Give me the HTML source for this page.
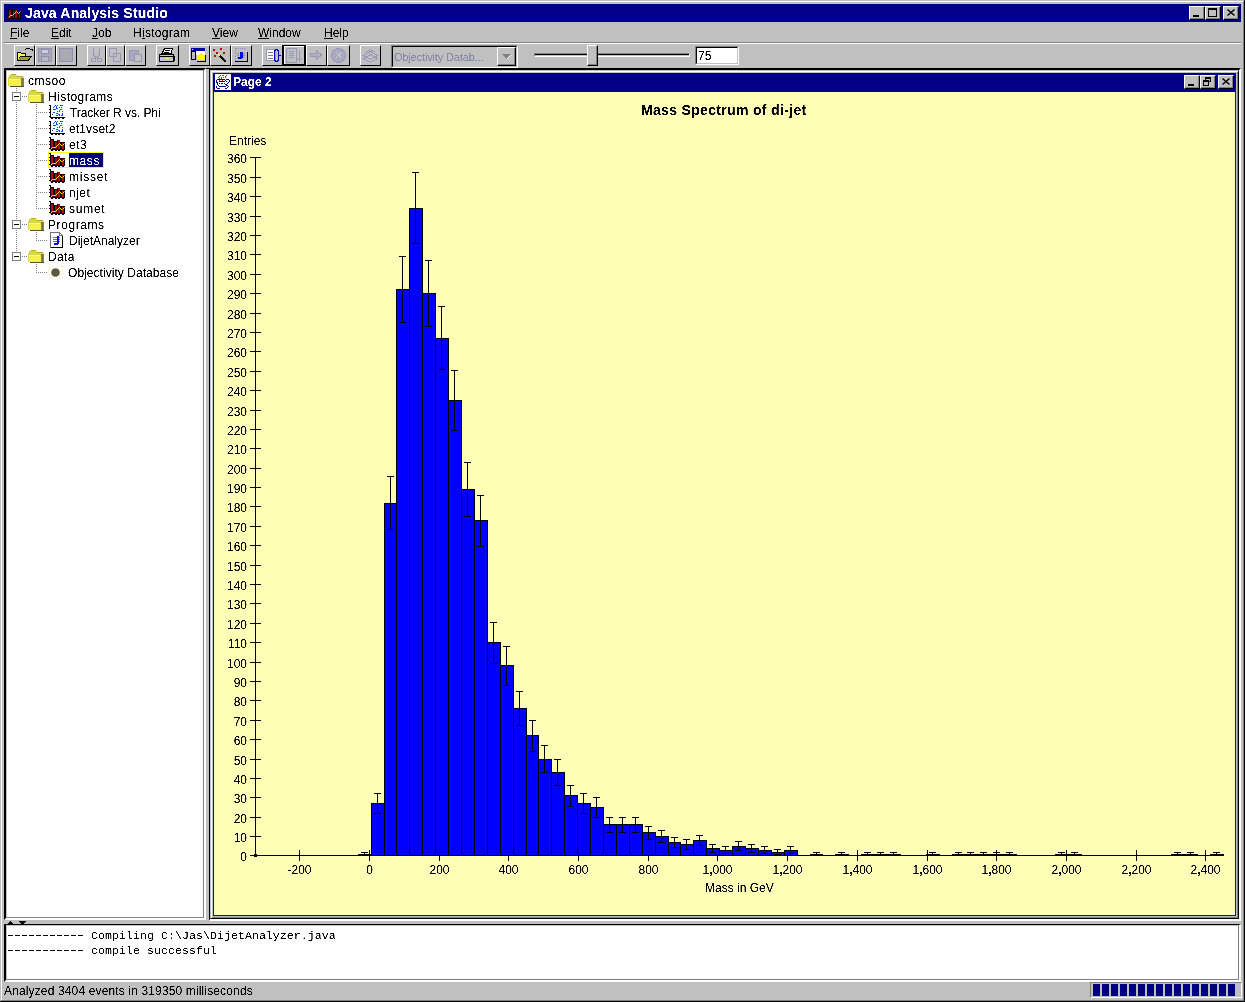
<!DOCTYPE html>
<html><head><meta charset="utf-8">
<style>
*{margin:0;padding:0;box-sizing:border-box}
html,body{width:1245px;height:1002px;overflow:hidden;background:#c0c0c0;font-family:"Liberation Sans",sans-serif;font-size:12px;color:#000}
.a{position:absolute}
.t{position:absolute;white-space:nowrap;line-height:12px;filter:url(#crisp)}
.btn{position:absolute;background:#c0c0c0;border-top:1px solid #fff;border-left:1px solid #fff;border-right:1px solid #000;border-bottom:1px solid #000}
.tb{position:absolute;background:#c0c0c0;border-top:1px solid #fff;border-left:1px solid #fff;border-right:1px solid #000;border-bottom:1px solid #000;box-shadow:inset -1px -1px 0 #808080}
.u{text-decoration:underline}
svg{position:absolute;overflow:visible}
</style></head><body>
<svg width="0" height="0" style="position:absolute;left:0;top:0"><filter id="crisp" x="-20%" y="-60%" width="140%" height="220%"><feComponentTransfer><feFuncA type="linear" slope="3" intercept="-0.9"/></feComponentTransfer></filter></svg>
<!-- outer frame -->
<div class="a" style="left:1px;top:1px;width:1242px;height:999px;border-top:1px solid #fff;border-left:1px solid #fff"></div>
<div class="a" style="left:1243px;top:1px;width:1px;height:1000px;background:#808080"></div>
<div class="a" style="left:1244px;top:0;width:1px;height:1002px;background:#000"></div>
<div class="a" style="left:1px;top:1000px;width:1243px;height:1px;background:#808080"></div>
<div class="a" style="left:0;top:1001px;width:1245px;height:1px;background:#000"></div>

<!-- title bar -->
<div class="a" style="left:4px;top:4px;width:1237px;height:18px;background:#000088"></div>
<div class="t" style="left:25px;top:7px;color:#fff;font-weight:bold;font-size:14px;letter-spacing:0.17px">Java Analysis Studio</div>
<div class="btn" style="left:1189px;top:6px;width:16px;height:14px;box-shadow:inset -1px -1px 0 #808080"></div>
<div class="a" style="left:1193px;top:15px;width:6px;height:2px;background:#000"></div>
<div class="btn" style="left:1205px;top:6px;width:16px;height:14px;box-shadow:inset -1px -1px 0 #808080"></div>
<div class="a" style="left:1208px;top:8px;width:9px;height:9px;border:1px solid #000;border-top-width:2px"></div>
<div class="btn" style="left:1223px;top:6px;width:16px;height:14px;box-shadow:inset -1px -1px 0 #808080"></div>
<svg style="left:1227px;top:9px" width="8" height="7"><path d="M0.5 0.5L7.5 6.5M7.5 0.5L0.5 6.5" stroke="#000" stroke-width="1.5"/></svg>


<!-- menu -->
<div class="t" style="left:10px;top:27px"><span class="u">F</span>ile</div>
<div class="t" style="left:51px;top:27px"><span class="u">E</span>dit</div>
<div class="t" style="left:92px;top:27px"><span class="u">J</span>ob</div>
<div class="t" style="left:133px;top:27px;letter-spacing:0.3px">H<span class="u">i</span>stogram</div>
<div class="t" style="left:212px;top:27px"><span class="u">V</span>iew</div>
<div class="t" style="left:258px;top:27px"><span class="u">W</span>indow</div>
<div class="t" style="left:324px;top:27px"><span class="u">H</span>elp</div>
<div class="a" style="left:4px;top:42px;width:1237px;height:1px;background:#808080"></div>
<div class="a" style="left:5px;top:43px;width:1236px;height:1px;background:#fff"></div>

<!-- TOOLBAR -->
<div class="tb" style="left:14px;top:45px;width:21px;height:21px;box-shadow:none"></div>
<div class="tb" style="left:35px;top:45px;width:21px;height:21px;box-shadow:none"></div>
<div class="tb" style="left:56px;top:45px;width:21px;height:21px;box-shadow:none"></div>
<div class="tb" style="left:87px;top:45px;width:19px;height:21px;box-shadow:none"></div>
<div class="tb" style="left:106px;top:45px;width:19px;height:21px;box-shadow:none"></div>
<div class="tb" style="left:125px;top:45px;width:21px;height:21px;box-shadow:none"></div>
<div class="tb" style="left:156px;top:45px;width:23px;height:21px;box-shadow:none"></div>
<div class="tb" style="left:189px;top:45px;width:21px;height:21px;box-shadow:none"></div>
<div class="tb" style="left:210px;top:45px;width:21px;height:21px;box-shadow:none"></div>
<div class="tb" style="left:231px;top:45px;width:21px;height:21px;box-shadow:none"></div>
<div class="tb" style="left:262px;top:45px;width:21px;height:21px;box-shadow:none"></div>
<div class="a" style="left:282px;top:45px;width:24px;height:21px;border:2px solid #000;border-top-width:1px;background:#c0c0c0;box-shadow:inset 1px 1px 0 #fff"></div>
<div class="tb" style="left:306px;top:45px;width:21px;height:21px;box-shadow:none"></div>
<div class="tb" style="left:327px;top:45px;width:23px;height:21px;box-shadow:none"></div>
<div class="tb" style="left:360px;top:45px;width:21px;height:21px;box-shadow:none"></div>
<svg style="left:0;top:0" width="400" height="70" shape-rendering="crispEdges">
<!-- open folder -->
<path d="M17 52h4v1h5v3h6l-3 5h-12z" fill="#000"/>
<path d="M18 53h3v1h4v2h-5l-2 4z" fill="#ffff40"/>
<path d="M20 57h10l-2 3h-10z" fill="#a0a020"/>
<path d="M25 50q3-3 6 0" stroke="#000" fill="none" stroke-width="1"/>
<path d="M30 49h3v3z" fill="#000"/>
<!-- save disabled -->
<g stroke="#9090b0" stroke-width="1"><rect x="38.5" y="48.5" width="13" height="13" fill="#a8a8b8"/><rect x="41.5" y="49.5" width="7" height="4" fill="#d0d0d8"/><rect x="41.5" y="56.5" width="7" height="5" fill="#b8b8c0"/></g>
<g stroke="#9090b0" stroke-width="1"><rect x="59.5" y="48.5" width="13" height="13" fill="#a8a8b8"/><path d="M62 51h7M62 54h7M62 57h7" stroke="#b8b098"/></g>
<!-- cut/copy/paste disabled -->
<g fill="none" stroke="#9898b8" stroke-width="1"><path d="M93.5 48v7l3 3M99.5 48v7l-3 3"/><circle cx="93.5" cy="60" r="2"/><circle cx="99.5" cy="60" r="2"/></g>
<g fill="none" stroke="#9898b8" stroke-width="1"><rect x="109.5" y="48.5" width="7" height="8"/><rect x="113.5" y="53.5" width="7" height="8"/></g>
<g fill="none" stroke="#9898b8" stroke-width="1"><rect x="129.5" y="50.5" width="9" height="10" fill="#a8a8c0"/><rect x="134.5" y="54.5" width="7" height="7" fill="#c0c0c0"/></g>
<!-- printer -->
<path d="M164.5 48.5h8l-1.5 5h-9z" fill="#fff" stroke="#000"/>
<path d="M165 50.5h5M164 52.5h5" stroke="#000"/>
<rect x="159.5" y="54.5" width="14" height="7" fill="#c4c4cc" stroke="#000"/>
<path d="M160 56.5h13M174.5 55.5v5" stroke="#000"/>
<rect x="166" y="58" width="3" height="1" fill="#ffff00"/>
<!-- window+folder -->
<rect x="191" y="48" width="14" height="3" fill="#0000a0"/>
<rect x="192" y="49" width="1" height="1" fill="#fff"/>
<rect x="191.5" y="51.5" width="4" height="8" fill="#c0c0c0" stroke="#000"/>
<rect x="196" y="51" width="9" height="4" fill="#fff"/>
<path d="M197 55h2l1-2h2l1 2h2v5h-8z" fill="#ffff00"/>
<path d="M205.5 55v6.5h-9" stroke="#000" fill="none"/>
<!-- wand -->
<path d="M219 55l7 7" stroke="#000" stroke-width="2"/>
<rect x="218" y="54" width="2" height="2" fill="#ffff00"/>
<g fill="#c00000"><rect x="213" y="49" width="2" height="2"/><rect x="216" y="52" width="2" height="2"/><rect x="220" y="48" width="2" height="2"/><rect x="223" y="52" width="2" height="2"/><rect x="214" y="55" width="2" height="2"/></g>
<!-- java doc -->
<path d="M235.5 48.5h9l3 3v10h-12z" fill="none" stroke="#9090a8" stroke-dasharray="1 1"/>
<path d="M247.5 51.5v10.5M235 61.5h13" stroke="#000"/>
<g stroke="#909090"><path d="M237 53.5h2M237 55.5h2M237 57.5h2M243 53.5h2M243 55.5h2M243 57.5h2"/></g>
<path d="M240 52h3v6h-1v1h-4v-2h2z" fill="#0000ff"/>
<!-- page w/ bracket -->
<rect x="266.5" y="49.5" width="9" height="11" fill="#fff" stroke="#9898b8"/>
<g stroke="#808080"><path d="M268 52h5M268 55h5M268 58h5"/></g>
<path d="M276.5 49.5q-2 0-2 3v6q0 3 2 3M276.5 49.5q2 0 2 3v6q0 3-2 3" stroke="#0000c0" fill="none"/>
<path d="M279 55h2" stroke="#0000c0"/>
<!-- list disabled -->
<g stroke="#9898b8" fill="none"><rect x="286.5" y="48.5" width="10" height="14"/><path d="M289 51.5h5M289 53.5h5M289 55.5h5M289 57.5h5"/><path d="M299.5 50v10M297.5 58l2 3 2-3"/></g>
<!-- arrow disabled -->
<path d="M310.5 53.5h6v-3l5 4.5-5 4.5v-3h-6z" fill="#b0b0c8" stroke="#9898b8"/>
<!-- circle disabled -->
<circle cx="338.5" cy="55.5" r="7" fill="#a8a8c0" stroke="#9898b8"/>
<path d="M336 52l3 3-3 3M341 52l-2 3 2 3" stroke="#c8c8c8" fill="none"/>
<!-- stack disabled -->
<g stroke="#9898b8" fill="none"><path d="M363.5 58.5l7-4 7 4-7 4z"/><path d="M363.5 55.5l7-4 7 4-7 4z"/><path d="M365.5 52.5l5-3 5 3"/></g>
</svg>
<!-- combo -->
<div class="a" style="left:391px;top:45px;width:127px;height:23px;border-top:1px solid #808080;border-left:1px solid #808080;border-right:1px solid #fff;border-bottom:1px solid #fff"></div>
<div class="a" style="left:392px;top:46px;width:125px;height:21px;border-top:1px solid #000;border-left:1px solid #000;border-right:1px solid #c0c0c0;border-bottom:1px solid #c0c0c0"></div>
<div class="t" style="left:394px;top:51px;color:#8888a8;font-size:11px;letter-spacing:-0.15px">Objectivity Datab...</div>
<div class="tb" style="left:497px;top:47px;width:19px;height:19px"></div>
<svg style="left:502px;top:54px" width="9" height="5"><path d="M0 0h9l-4.5 5z" fill="#808080"/><path d="M5 5l4-4" stroke="#fff"/></svg>
<!-- slider -->
<div class="a" style="left:534px;top:53px;width:156px;height:4px;border-top:1px solid #808080;border-left:1px solid #808080;border-right:1px solid #fff;border-bottom:1px solid #fff"></div>
<div class="a" style="left:535px;top:54px;width:154px;height:1px;background:#000"></div>
<div class="tb" style="left:587px;top:45px;width:11px;height:21px"></div>
<!-- text field -->
<div class="a" style="left:695px;top:46px;width:44px;height:19px;border-top:1px solid #808080;border-left:1px solid #808080;border-right:1px solid #fff;border-bottom:1px solid #fff"></div>
<div class="a" style="left:696px;top:47px;width:42px;height:17px;border-top:1px solid #000;border-left:1px solid #000;border-right:1px solid #c0c0c0;border-bottom:1px solid #c0c0c0;background:#fff"></div>
<div class="t" style="left:698px;top:50px">75</div>


<!-- tree panel -->
<div class="a" style="left:4px;top:68px;width:1237px;height:2px;background:#000"></div>
<div class="a" style="left:4px;top:68px;width:202px;height:852px;border-top:2px solid #000;border-left:2px solid #000;border-right:2px solid #fff;border-bottom:2px solid #fff;background:#fff"></div>
<div class="a" style="left:6px;top:70px;width:198px;height:848px;border-right:1px solid #808080;border-bottom:1px solid #808080;border-top:1px solid #c0c0c0;border-left:1px solid #c0c0c0"></div>
<svg style="left:0;top:0" width="210" height="300" shape-rendering="crispEdges"><rect x="16" y="88" width="1" height="1" fill="#808080"/><rect x="16" y="90" width="1" height="1" fill="#808080"/><rect x="16" y="92" width="1" height="1" fill="#808080"/><rect x="16" y="94" width="1" height="1" fill="#808080"/><rect x="16" y="96" width="1" height="1" fill="#808080"/><rect x="16" y="98" width="1" height="1" fill="#808080"/><rect x="16" y="100" width="1" height="1" fill="#808080"/><rect x="16" y="102" width="1" height="1" fill="#808080"/><rect x="16" y="104" width="1" height="1" fill="#808080"/><rect x="16" y="106" width="1" height="1" fill="#808080"/><rect x="16" y="108" width="1" height="1" fill="#808080"/><rect x="16" y="110" width="1" height="1" fill="#808080"/><rect x="16" y="112" width="1" height="1" fill="#808080"/><rect x="16" y="114" width="1" height="1" fill="#808080"/><rect x="16" y="116" width="1" height="1" fill="#808080"/><rect x="16" y="118" width="1" height="1" fill="#808080"/><rect x="16" y="120" width="1" height="1" fill="#808080"/><rect x="16" y="122" width="1" height="1" fill="#808080"/><rect x="16" y="124" width="1" height="1" fill="#808080"/><rect x="16" y="126" width="1" height="1" fill="#808080"/><rect x="16" y="128" width="1" height="1" fill="#808080"/><rect x="16" y="130" width="1" height="1" fill="#808080"/><rect x="16" y="132" width="1" height="1" fill="#808080"/><rect x="16" y="134" width="1" height="1" fill="#808080"/><rect x="16" y="136" width="1" height="1" fill="#808080"/><rect x="16" y="138" width="1" height="1" fill="#808080"/><rect x="16" y="140" width="1" height="1" fill="#808080"/><rect x="16" y="142" width="1" height="1" fill="#808080"/><rect x="16" y="144" width="1" height="1" fill="#808080"/><rect x="16" y="146" width="1" height="1" fill="#808080"/><rect x="16" y="148" width="1" height="1" fill="#808080"/><rect x="16" y="150" width="1" height="1" fill="#808080"/><rect x="16" y="152" width="1" height="1" fill="#808080"/><rect x="16" y="154" width="1" height="1" fill="#808080"/><rect x="16" y="156" width="1" height="1" fill="#808080"/><rect x="16" y="158" width="1" height="1" fill="#808080"/><rect x="16" y="160" width="1" height="1" fill="#808080"/><rect x="16" y="162" width="1" height="1" fill="#808080"/><rect x="16" y="164" width="1" height="1" fill="#808080"/><rect x="16" y="166" width="1" height="1" fill="#808080"/><rect x="16" y="168" width="1" height="1" fill="#808080"/><rect x="16" y="170" width="1" height="1" fill="#808080"/><rect x="16" y="172" width="1" height="1" fill="#808080"/><rect x="16" y="174" width="1" height="1" fill="#808080"/><rect x="16" y="176" width="1" height="1" fill="#808080"/><rect x="16" y="178" width="1" height="1" fill="#808080"/><rect x="16" y="180" width="1" height="1" fill="#808080"/><rect x="16" y="182" width="1" height="1" fill="#808080"/><rect x="16" y="184" width="1" height="1" fill="#808080"/><rect x="16" y="186" width="1" height="1" fill="#808080"/><rect x="16" y="188" width="1" height="1" fill="#808080"/><rect x="16" y="190" width="1" height="1" fill="#808080"/><rect x="16" y="192" width="1" height="1" fill="#808080"/><rect x="16" y="194" width="1" height="1" fill="#808080"/><rect x="16" y="196" width="1" height="1" fill="#808080"/><rect x="16" y="198" width="1" height="1" fill="#808080"/><rect x="16" y="200" width="1" height="1" fill="#808080"/><rect x="16" y="202" width="1" height="1" fill="#808080"/><rect x="16" y="204" width="1" height="1" fill="#808080"/><rect x="16" y="206" width="1" height="1" fill="#808080"/><rect x="16" y="208" width="1" height="1" fill="#808080"/><rect x="16" y="210" width="1" height="1" fill="#808080"/><rect x="16" y="212" width="1" height="1" fill="#808080"/><rect x="16" y="214" width="1" height="1" fill="#808080"/><rect x="16" y="216" width="1" height="1" fill="#808080"/><rect x="16" y="218" width="1" height="1" fill="#808080"/><rect x="16" y="220" width="1" height="1" fill="#808080"/><rect x="16" y="222" width="1" height="1" fill="#808080"/><rect x="16" y="224" width="1" height="1" fill="#808080"/><rect x="16" y="226" width="1" height="1" fill="#808080"/><rect x="16" y="228" width="1" height="1" fill="#808080"/><rect x="16" y="230" width="1" height="1" fill="#808080"/><rect x="16" y="232" width="1" height="1" fill="#808080"/><rect x="16" y="234" width="1" height="1" fill="#808080"/><rect x="16" y="236" width="1" height="1" fill="#808080"/><rect x="16" y="238" width="1" height="1" fill="#808080"/><rect x="16" y="240" width="1" height="1" fill="#808080"/><rect x="16" y="242" width="1" height="1" fill="#808080"/><rect x="16" y="244" width="1" height="1" fill="#808080"/><rect x="16" y="246" width="1" height="1" fill="#808080"/><rect x="16" y="248" width="1" height="1" fill="#808080"/><rect x="16" y="250" width="1" height="1" fill="#808080"/><rect x="16" y="252" width="1" height="1" fill="#808080"/><rect x="16" y="254" width="1" height="1" fill="#808080"/><rect x="16" y="256" width="1" height="1" fill="#808080"/><rect x="36" y="104" width="1" height="1" fill="#808080"/><rect x="36" y="106" width="1" height="1" fill="#808080"/><rect x="36" y="108" width="1" height="1" fill="#808080"/><rect x="36" y="110" width="1" height="1" fill="#808080"/><rect x="36" y="112" width="1" height="1" fill="#808080"/><rect x="36" y="114" width="1" height="1" fill="#808080"/><rect x="36" y="116" width="1" height="1" fill="#808080"/><rect x="36" y="118" width="1" height="1" fill="#808080"/><rect x="36" y="120" width="1" height="1" fill="#808080"/><rect x="36" y="122" width="1" height="1" fill="#808080"/><rect x="36" y="124" width="1" height="1" fill="#808080"/><rect x="36" y="126" width="1" height="1" fill="#808080"/><rect x="36" y="128" width="1" height="1" fill="#808080"/><rect x="36" y="130" width="1" height="1" fill="#808080"/><rect x="36" y="132" width="1" height="1" fill="#808080"/><rect x="36" y="134" width="1" height="1" fill="#808080"/><rect x="36" y="136" width="1" height="1" fill="#808080"/><rect x="36" y="138" width="1" height="1" fill="#808080"/><rect x="36" y="140" width="1" height="1" fill="#808080"/><rect x="36" y="142" width="1" height="1" fill="#808080"/><rect x="36" y="144" width="1" height="1" fill="#808080"/><rect x="36" y="146" width="1" height="1" fill="#808080"/><rect x="36" y="148" width="1" height="1" fill="#808080"/><rect x="36" y="150" width="1" height="1" fill="#808080"/><rect x="36" y="152" width="1" height="1" fill="#808080"/><rect x="36" y="154" width="1" height="1" fill="#808080"/><rect x="36" y="156" width="1" height="1" fill="#808080"/><rect x="36" y="158" width="1" height="1" fill="#808080"/><rect x="36" y="160" width="1" height="1" fill="#808080"/><rect x="36" y="162" width="1" height="1" fill="#808080"/><rect x="36" y="164" width="1" height="1" fill="#808080"/><rect x="36" y="166" width="1" height="1" fill="#808080"/><rect x="36" y="168" width="1" height="1" fill="#808080"/><rect x="36" y="170" width="1" height="1" fill="#808080"/><rect x="36" y="172" width="1" height="1" fill="#808080"/><rect x="36" y="174" width="1" height="1" fill="#808080"/><rect x="36" y="176" width="1" height="1" fill="#808080"/><rect x="36" y="178" width="1" height="1" fill="#808080"/><rect x="36" y="180" width="1" height="1" fill="#808080"/><rect x="36" y="182" width="1" height="1" fill="#808080"/><rect x="36" y="184" width="1" height="1" fill="#808080"/><rect x="36" y="186" width="1" height="1" fill="#808080"/><rect x="36" y="188" width="1" height="1" fill="#808080"/><rect x="36" y="190" width="1" height="1" fill="#808080"/><rect x="36" y="192" width="1" height="1" fill="#808080"/><rect x="36" y="194" width="1" height="1" fill="#808080"/><rect x="36" y="196" width="1" height="1" fill="#808080"/><rect x="36" y="198" width="1" height="1" fill="#808080"/><rect x="36" y="200" width="1" height="1" fill="#808080"/><rect x="36" y="202" width="1" height="1" fill="#808080"/><rect x="36" y="204" width="1" height="1" fill="#808080"/><rect x="36" y="206" width="1" height="1" fill="#808080"/><rect x="36" y="208" width="1" height="1" fill="#808080"/><rect x="36" y="232" width="1" height="1" fill="#808080"/><rect x="36" y="234" width="1" height="1" fill="#808080"/><rect x="36" y="236" width="1" height="1" fill="#808080"/><rect x="36" y="238" width="1" height="1" fill="#808080"/><rect x="36" y="240" width="1" height="1" fill="#808080"/><rect x="36" y="264" width="1" height="1" fill="#808080"/><rect x="36" y="266" width="1" height="1" fill="#808080"/><rect x="36" y="268" width="1" height="1" fill="#808080"/><rect x="36" y="270" width="1" height="1" fill="#808080"/><rect x="36" y="272" width="1" height="1" fill="#808080"/><rect x="11" y="74" width="5" height="1" fill="#c8a030"/><rect x="9" y="75" width="8" height="2" fill="#d8d840"/><rect x="17" y="76" width="6" height="1" fill="#c8a030"/><rect x="8" y="77" width="16" height="9" fill="#d8d848"/><rect x="9" y="79" width="11" height="1" fill="#e8e8f8"/><rect x="9" y="80" width="12" height="6" fill="#f4f050"/><rect x="21" y="78" width="3" height="8" fill="#808048"/><rect x="10" y="86" width="14" height="1" fill="#505030"/><rect x="12.5" y="92.5" width="8" height="8" fill="#fff" stroke="#808080"/><rect x="14" y="96" width="5" height="1" fill="#000"/><rect x="22" y="96" width="1" height="1" fill="#808080"/><rect x="24" y="96" width="1" height="1" fill="#808080"/><rect x="26" y="96" width="1" height="1" fill="#808080"/><rect x="31" y="90" width="5" height="1" fill="#c8a030"/><rect x="29" y="91" width="8" height="2" fill="#d8d840"/><rect x="37" y="92" width="6" height="1" fill="#c8a030"/><rect x="28" y="93" width="16" height="9" fill="#d8d848"/><rect x="29" y="95" width="11" height="1" fill="#e8e8f8"/><rect x="29" y="96" width="12" height="6" fill="#f4f050"/><rect x="41" y="94" width="3" height="8" fill="#808048"/><rect x="30" y="102" width="14" height="1" fill="#505030"/><rect x="38" y="112" width="1" height="1" fill="#808080"/><rect x="40" y="112" width="1" height="1" fill="#808080"/><rect x="42" y="112" width="1" height="1" fill="#808080"/><rect x="44" y="112" width="1" height="1" fill="#808080"/><rect x="46" y="112" width="1" height="1" fill="#808080"/><rect x="50" y="105" width="1" height="13" fill="#000"/><rect x="49" y="105" width="1" height="1" fill="#000"/><rect x="49" y="109" width="1" height="1" fill="#000"/><rect x="49" y="112" width="1" height="1" fill="#000"/><rect x="49" y="116" width="1" height="1" fill="#000"/><rect x="50" y="117" width="15" height="1" fill="#000"/><rect x="51" y="118" width="2" height="1" fill="#000"/><rect x="55" y="118" width="2" height="1" fill="#000"/><rect x="58" y="118" width="2" height="1" fill="#000"/><rect x="62" y="118" width="2" height="1" fill="#000"/><rect x="54" y="106" width="1" height="1" fill="#0050ff"/><rect x="55" y="105" width="1" height="1" fill="#0050ff"/><rect x="57" y="105" width="1" height="1" fill="#0050ff"/><rect x="60" y="105" width="1" height="1" fill="#0050ff"/><rect x="61" y="105" width="1" height="1" fill="#0050ff"/><rect x="62" y="105" width="1" height="1" fill="#0050ff"/><rect x="53" y="107" width="1" height="1" fill="#0050ff"/><rect x="56" y="106" width="1" height="1" fill="#0050ff"/><rect x="56" y="107" width="1" height="1" fill="#0050ff"/><rect x="59" y="107" width="1" height="1" fill="#0050ff"/><rect x="61" y="107" width="1" height="1" fill="#0050ff"/><rect x="53" y="109" width="1" height="1" fill="#0050ff"/><rect x="54" y="109" width="1" height="1" fill="#0050ff"/><rect x="55" y="109" width="1" height="1" fill="#0050ff"/><rect x="56" y="108" width="1" height="1" fill="#0050ff"/><rect x="57" y="108" width="1" height="1" fill="#0050ff"/><rect x="60" y="109" width="1" height="1" fill="#0050ff"/><rect x="61" y="109" width="1" height="1" fill="#0050ff"/><rect x="59" y="110" width="1" height="1" fill="#0050ff"/><rect x="59" y="111" width="1" height="1" fill="#0050ff"/><rect x="57" y="111" width="1" height="1" fill="#0050ff"/><rect x="62" y="111" width="1" height="1" fill="#0050ff"/><rect x="53" y="112" width="1" height="1" fill="#0050ff"/><rect x="54" y="112" width="1" height="1" fill="#0050ff"/><rect x="56" y="113" width="1" height="1" fill="#0050ff"/><rect x="57" y="113" width="1" height="1" fill="#0050ff"/><rect x="58" y="114" width="1" height="1" fill="#0050ff"/><rect x="52" y="114" width="1" height="1" fill="#0050ff"/><rect x="56" y="115" width="1" height="1" fill="#0050ff"/><rect x="57" y="115" width="1" height="1" fill="#0050ff"/><rect x="59" y="114" width="1" height="1" fill="#0050ff"/><rect x="59" y="115" width="1" height="1" fill="#0050ff"/><rect x="62" y="113" width="1" height="1" fill="#0050ff"/><rect x="62" y="114" width="1" height="1" fill="#0050ff"/><rect x="61" y="115" width="1" height="1" fill="#0050ff"/><rect x="62" y="115" width="1" height="1" fill="#0050ff"/><rect x="38" y="128" width="1" height="1" fill="#808080"/><rect x="40" y="128" width="1" height="1" fill="#808080"/><rect x="42" y="128" width="1" height="1" fill="#808080"/><rect x="44" y="128" width="1" height="1" fill="#808080"/><rect x="46" y="128" width="1" height="1" fill="#808080"/><rect x="50" y="121" width="1" height="13" fill="#000"/><rect x="49" y="121" width="1" height="1" fill="#000"/><rect x="49" y="125" width="1" height="1" fill="#000"/><rect x="49" y="128" width="1" height="1" fill="#000"/><rect x="49" y="132" width="1" height="1" fill="#000"/><rect x="50" y="133" width="15" height="1" fill="#000"/><rect x="51" y="134" width="2" height="1" fill="#000"/><rect x="55" y="134" width="2" height="1" fill="#000"/><rect x="58" y="134" width="2" height="1" fill="#000"/><rect x="62" y="134" width="2" height="1" fill="#000"/><rect x="54" y="122" width="1" height="1" fill="#0050ff"/><rect x="55" y="121" width="1" height="1" fill="#0050ff"/><rect x="57" y="121" width="1" height="1" fill="#0050ff"/><rect x="60" y="121" width="1" height="1" fill="#0050ff"/><rect x="61" y="121" width="1" height="1" fill="#0050ff"/><rect x="62" y="121" width="1" height="1" fill="#0050ff"/><rect x="53" y="123" width="1" height="1" fill="#0050ff"/><rect x="56" y="122" width="1" height="1" fill="#0050ff"/><rect x="56" y="123" width="1" height="1" fill="#0050ff"/><rect x="59" y="123" width="1" height="1" fill="#0050ff"/><rect x="61" y="123" width="1" height="1" fill="#0050ff"/><rect x="53" y="125" width="1" height="1" fill="#0050ff"/><rect x="54" y="125" width="1" height="1" fill="#0050ff"/><rect x="55" y="125" width="1" height="1" fill="#0050ff"/><rect x="56" y="124" width="1" height="1" fill="#0050ff"/><rect x="57" y="124" width="1" height="1" fill="#0050ff"/><rect x="60" y="125" width="1" height="1" fill="#0050ff"/><rect x="61" y="125" width="1" height="1" fill="#0050ff"/><rect x="59" y="126" width="1" height="1" fill="#0050ff"/><rect x="59" y="127" width="1" height="1" fill="#0050ff"/><rect x="57" y="127" width="1" height="1" fill="#0050ff"/><rect x="62" y="127" width="1" height="1" fill="#0050ff"/><rect x="53" y="128" width="1" height="1" fill="#0050ff"/><rect x="54" y="128" width="1" height="1" fill="#0050ff"/><rect x="56" y="129" width="1" height="1" fill="#0050ff"/><rect x="57" y="129" width="1" height="1" fill="#0050ff"/><rect x="58" y="130" width="1" height="1" fill="#0050ff"/><rect x="52" y="130" width="1" height="1" fill="#0050ff"/><rect x="56" y="131" width="1" height="1" fill="#0050ff"/><rect x="57" y="131" width="1" height="1" fill="#0050ff"/><rect x="59" y="130" width="1" height="1" fill="#0050ff"/><rect x="59" y="131" width="1" height="1" fill="#0050ff"/><rect x="62" y="129" width="1" height="1" fill="#0050ff"/><rect x="62" y="130" width="1" height="1" fill="#0050ff"/><rect x="61" y="131" width="1" height="1" fill="#0050ff"/><rect x="62" y="131" width="1" height="1" fill="#0050ff"/><rect x="38" y="144" width="1" height="1" fill="#808080"/><rect x="40" y="144" width="1" height="1" fill="#808080"/><rect x="42" y="144" width="1" height="1" fill="#808080"/><rect x="44" y="144" width="1" height="1" fill="#808080"/><rect x="46" y="144" width="1" height="1" fill="#808080"/><rect x="50" y="137" width="1" height="13" fill="#000"/><rect x="49" y="137" width="1" height="1" fill="#000"/><rect x="49" y="141" width="1" height="1" fill="#000"/><rect x="49" y="144" width="1" height="1" fill="#000"/><rect x="49" y="148" width="1" height="1" fill="#000"/><path d="M51 139h3v2h3v-1h3v2h5v8h-14z" fill="#000"/><rect x="51" y="140" width="2" height="9" fill="#b00000"/><rect x="55" y="142" width="2" height="7" fill="#b00000"/><rect x="58" y="140" width="2" height="9" fill="#b00000"/><rect x="62" y="143" width="2" height="6" fill="#b00000"/><rect x="51" y="150" width="2" height="1" fill="#000"/><rect x="55" y="150" width="2" height="1" fill="#000"/><rect x="58" y="150" width="2" height="1" fill="#000"/><rect x="62" y="150" width="2" height="1" fill="#000"/><path d="M50.5 149.5l2-2h3l4-4 2 2h1l2-2" stroke="#ffff00" fill="none" shape-rendering="auto"/><rect x="38" y="160" width="1" height="1" fill="#808080"/><rect x="40" y="160" width="1" height="1" fill="#808080"/><rect x="42" y="160" width="1" height="1" fill="#808080"/><rect x="44" y="160" width="1" height="1" fill="#808080"/><rect x="46" y="160" width="1" height="1" fill="#808080"/><rect x="50" y="153" width="1" height="13" fill="#000"/><rect x="49" y="153" width="1" height="1" fill="#000"/><rect x="49" y="157" width="1" height="1" fill="#000"/><rect x="49" y="160" width="1" height="1" fill="#000"/><rect x="49" y="164" width="1" height="1" fill="#000"/><path d="M51 155h3v2h3v-1h3v2h5v8h-14z" fill="#000"/><rect x="51" y="156" width="2" height="9" fill="#b00000"/><rect x="55" y="158" width="2" height="7" fill="#b00000"/><rect x="58" y="156" width="2" height="9" fill="#b00000"/><rect x="62" y="159" width="2" height="6" fill="#b00000"/><rect x="51" y="166" width="2" height="1" fill="#000"/><rect x="55" y="166" width="2" height="1" fill="#000"/><rect x="58" y="166" width="2" height="1" fill="#000"/><rect x="62" y="166" width="2" height="1" fill="#000"/><path d="M50.5 165.5l2-2h3l4-4 2 2h1l2-2" stroke="#ffff00" fill="none" shape-rendering="auto"/><rect x="38" y="176" width="1" height="1" fill="#808080"/><rect x="40" y="176" width="1" height="1" fill="#808080"/><rect x="42" y="176" width="1" height="1" fill="#808080"/><rect x="44" y="176" width="1" height="1" fill="#808080"/><rect x="46" y="176" width="1" height="1" fill="#808080"/><rect x="50" y="169" width="1" height="13" fill="#000"/><rect x="49" y="169" width="1" height="1" fill="#000"/><rect x="49" y="173" width="1" height="1" fill="#000"/><rect x="49" y="176" width="1" height="1" fill="#000"/><rect x="49" y="180" width="1" height="1" fill="#000"/><path d="M51 171h3v2h3v-1h3v2h5v8h-14z" fill="#000"/><rect x="51" y="172" width="2" height="9" fill="#b00000"/><rect x="55" y="174" width="2" height="7" fill="#b00000"/><rect x="58" y="172" width="2" height="9" fill="#b00000"/><rect x="62" y="175" width="2" height="6" fill="#b00000"/><rect x="51" y="182" width="2" height="1" fill="#000"/><rect x="55" y="182" width="2" height="1" fill="#000"/><rect x="58" y="182" width="2" height="1" fill="#000"/><rect x="62" y="182" width="2" height="1" fill="#000"/><path d="M50.5 181.5l2-2h3l4-4 2 2h1l2-2" stroke="#ffff00" fill="none" shape-rendering="auto"/><rect x="38" y="192" width="1" height="1" fill="#808080"/><rect x="40" y="192" width="1" height="1" fill="#808080"/><rect x="42" y="192" width="1" height="1" fill="#808080"/><rect x="44" y="192" width="1" height="1" fill="#808080"/><rect x="46" y="192" width="1" height="1" fill="#808080"/><rect x="50" y="185" width="1" height="13" fill="#000"/><rect x="49" y="185" width="1" height="1" fill="#000"/><rect x="49" y="189" width="1" height="1" fill="#000"/><rect x="49" y="192" width="1" height="1" fill="#000"/><rect x="49" y="196" width="1" height="1" fill="#000"/><path d="M51 187h3v2h3v-1h3v2h5v8h-14z" fill="#000"/><rect x="51" y="188" width="2" height="9" fill="#b00000"/><rect x="55" y="190" width="2" height="7" fill="#b00000"/><rect x="58" y="188" width="2" height="9" fill="#b00000"/><rect x="62" y="191" width="2" height="6" fill="#b00000"/><rect x="51" y="198" width="2" height="1" fill="#000"/><rect x="55" y="198" width="2" height="1" fill="#000"/><rect x="58" y="198" width="2" height="1" fill="#000"/><rect x="62" y="198" width="2" height="1" fill="#000"/><path d="M50.5 197.5l2-2h3l4-4 2 2h1l2-2" stroke="#ffff00" fill="none" shape-rendering="auto"/><rect x="38" y="208" width="1" height="1" fill="#808080"/><rect x="40" y="208" width="1" height="1" fill="#808080"/><rect x="42" y="208" width="1" height="1" fill="#808080"/><rect x="44" y="208" width="1" height="1" fill="#808080"/><rect x="46" y="208" width="1" height="1" fill="#808080"/><rect x="50" y="201" width="1" height="13" fill="#000"/><rect x="49" y="201" width="1" height="1" fill="#000"/><rect x="49" y="205" width="1" height="1" fill="#000"/><rect x="49" y="208" width="1" height="1" fill="#000"/><rect x="49" y="212" width="1" height="1" fill="#000"/><path d="M51 203h3v2h3v-1h3v2h5v8h-14z" fill="#000"/><rect x="51" y="204" width="2" height="9" fill="#b00000"/><rect x="55" y="206" width="2" height="7" fill="#b00000"/><rect x="58" y="204" width="2" height="9" fill="#b00000"/><rect x="62" y="207" width="2" height="6" fill="#b00000"/><rect x="51" y="214" width="2" height="1" fill="#000"/><rect x="55" y="214" width="2" height="1" fill="#000"/><rect x="58" y="214" width="2" height="1" fill="#000"/><rect x="62" y="214" width="2" height="1" fill="#000"/><path d="M50.5 213.5l2-2h3l4-4 2 2h1l2-2" stroke="#ffff00" fill="none" shape-rendering="auto"/><rect x="12.5" y="220.5" width="8" height="8" fill="#fff" stroke="#808080"/><rect x="14" y="224" width="5" height="1" fill="#000"/><rect x="22" y="224" width="1" height="1" fill="#808080"/><rect x="24" y="224" width="1" height="1" fill="#808080"/><rect x="26" y="224" width="1" height="1" fill="#808080"/><rect x="31" y="218" width="5" height="1" fill="#c8a030"/><rect x="29" y="219" width="8" height="2" fill="#d8d840"/><rect x="37" y="220" width="6" height="1" fill="#c8a030"/><rect x="28" y="221" width="16" height="9" fill="#d8d848"/><rect x="29" y="223" width="11" height="1" fill="#e8e8f8"/><rect x="29" y="224" width="12" height="6" fill="#f4f050"/><rect x="41" y="222" width="3" height="8" fill="#808048"/><rect x="30" y="230" width="14" height="1" fill="#505030"/><rect x="38" y="240" width="1" height="1" fill="#808080"/><rect x="40" y="240" width="1" height="1" fill="#808080"/><rect x="42" y="240" width="1" height="1" fill="#808080"/><rect x="44" y="240" width="1" height="1" fill="#808080"/><rect x="46" y="240" width="1" height="1" fill="#808080"/><path d="M50.5 232.5h9l3 3v12h-12z" fill="#fff" stroke="#707080"/><path d="M51 247.5h12M62.5 235v13" stroke="#000"/><path d="M59.5 232.5v3h3" stroke="#707080" fill="none"/><g stroke="#707080"><path d="M53 237.5h7M53 239.5h7M53 241.5h7"/></g><path d="M56 236h3v8h-1v1h-4v-2h3v-7z" fill="#0000ff"/><rect x="12.5" y="252.5" width="8" height="8" fill="#fff" stroke="#808080"/><rect x="14" y="256" width="5" height="1" fill="#000"/><rect x="22" y="256" width="1" height="1" fill="#808080"/><rect x="24" y="256" width="1" height="1" fill="#808080"/><rect x="26" y="256" width="1" height="1" fill="#808080"/><rect x="31" y="250" width="5" height="1" fill="#c8a030"/><rect x="29" y="251" width="8" height="2" fill="#d8d840"/><rect x="37" y="252" width="6" height="1" fill="#c8a030"/><rect x="28" y="253" width="16" height="9" fill="#d8d848"/><rect x="29" y="255" width="11" height="1" fill="#e8e8f8"/><rect x="29" y="256" width="12" height="6" fill="#f4f050"/><rect x="41" y="254" width="3" height="8" fill="#808048"/><rect x="30" y="262" width="14" height="1" fill="#505030"/><rect x="38" y="272" width="1" height="1" fill="#808080"/><rect x="40" y="272" width="1" height="1" fill="#808080"/><rect x="42" y="272" width="1" height="1" fill="#808080"/><rect x="44" y="272" width="1" height="1" fill="#808080"/><rect x="46" y="272" width="1" height="1" fill="#808080"/><circle cx="55.5" cy="272.5" r="4.3" fill="#5a5a40" shape-rendering="auto"/><rect x="49" y="267" width="1" height="1" fill="#f0f080"/><rect x="61" y="266" width="1" height="1" fill="#f0f080"/><rect x="63" y="266" width="1" height="1" fill="#f0f080"/><rect x="48" y="270" width="1" height="1" fill="#f0f080"/><rect x="60" y="271" width="1" height="1" fill="#f0f080"/><rect x="62" y="270" width="1" height="1" fill="#f0f080"/><rect x="49" y="274" width="1" height="1" fill="#f0f080"/><rect x="61" y="274" width="1" height="1" fill="#f0f080"/><rect x="63" y="273" width="1" height="1" fill="#f0f080"/><rect x="50" y="277" width="1" height="1" fill="#f0f080"/><rect x="52" y="277" width="1" height="1" fill="#f0f080"/><rect x="59" y="277" width="1" height="1" fill="#f0f080"/><rect x="62" y="277" width="1" height="1" fill="#f0f080"/></svg>
<div class="t" style="left:28px;top:75px;letter-spacing:0.5px">cmsoo</div>
<div class="t" style="left:48px;top:91px;letter-spacing:0.45px">Histograms</div>
<div class="t" style="left:70px;top:107px;letter-spacing:-0.06px">Tracker R vs. Phi</div>
<div class="t" style="left:69px;top:123px;letter-spacing:0.14px">et1vset2</div>
<div class="t" style="left:69px;top:139px;letter-spacing:0.5px">et3</div>
<div class="a" style="left:48px;top:152px;width:56px;height:16px;border:1px solid #ffff00"></div>
<div class="a" style="left:69px;top:153px;width:34px;height:14px;background:#000080"></div>
<div class="t" style="left:69px;top:155px;color:#fff;letter-spacing:0.6px">mass</div>
<div class="t" style="left:69px;top:171px;letter-spacing:0.8px">misset</div>
<div class="t" style="left:69px;top:187px;letter-spacing:0.5px">njet</div>
<div class="t" style="left:69px;top:203px;letter-spacing:0.75px">sumet</div>
<div class="t" style="left:48px;top:219px;letter-spacing:0.57px">Programs</div>
<div class="t" style="left:69px;top:235px;letter-spacing:0px">DijetAnalyzer</div>
<div class="t" style="left:48px;top:251px;letter-spacing:0.33px">Data</div>
<div class="t" style="left:68px;top:267px;letter-spacing:0.05px">Objectivity Database</div>

<!-- desktop -->
<div class="a" style="left:206px;top:69px;width:3px;height:1px;background:#c0c0c0"></div>
<div class="a" style="left:209px;top:68px;width:1032px;height:853px;border-top:2px solid #000;border-left:1px solid #000;border-right:2px solid #fff;border-bottom:2px solid #fff"></div>
<!-- internal frame -->
<div class="a" style="left:210px;top:70px;width:1029px;height:849px;background:#c0c0c0;border-top:1px solid #c0c0c0;border-left:1px solid #c0c0c0;border-right:1px solid #000;border-bottom:1px solid #000;box-shadow:inset 1px 1px 0 #fff, inset -1px -1px 0 #808080"></div>
<div class="a" style="left:213px;top:73px;width:1023px;height:19px;background:#000088"></div>
<div class="t" style="left:233px;top:76px;color:#fff;font-weight:bold">Page 2</div>
<div class="btn" style="left:1184px;top:75px;width:16px;height:14px;box-shadow:inset -1px -1px 0 #808080"></div>
<div class="a" style="left:1188px;top:84px;width:6px;height:2px;background:#000"></div>
<div class="btn" style="left:1200px;top:75px;width:16px;height:14px;box-shadow:inset -1px -1px 0 #808080"></div>
<div class="a" style="left:1205px;top:77px;width:6px;height:5px;border:1px solid #000;border-top-width:2px"></div>
<div class="a" style="left:1203px;top:80px;width:6px;height:6px;border:1px solid #000;border-top-width:2px;background:#c0c0c0"></div>
<div class="btn" style="left:1218px;top:75px;width:16px;height:14px;box-shadow:inset -1px -1px 0 #808080"></div>
<svg style="left:1222px;top:78px" width="8" height="7"><path d="M0.5 0.5L7.5 6.5M7.5 0.5L0.5 6.5" stroke="#000" stroke-width="1.5"/></svg>
<div class="a" style="left:213px;top:92px;width:1023px;height:824px;background:#ffffb6;border:1px solid #0000ff;border-top:none"></div>
<svg style="left:0;top:0" width="1245" height="1002" shape-rendering="crispEdges">
<rect x="255" y="855" width="969" height="1" fill="#000"/>
<rect x="255" y="157" width="1" height="699" fill="#000"/>
<rect x="254" y="854" width="3" height="3" fill="#000"/>
<rect x="250" y="855" width="11" height="1" fill="#000"/>
<rect x="250" y="836" width="11" height="1" fill="#000"/>
<rect x="250" y="817" width="11" height="1" fill="#000"/>
<rect x="250" y="797" width="11" height="1" fill="#000"/>
<rect x="250" y="778" width="11" height="1" fill="#000"/>
<rect x="250" y="759" width="11" height="1" fill="#000"/>
<rect x="250" y="739" width="11" height="1" fill="#000"/>
<rect x="250" y="720" width="11" height="1" fill="#000"/>
<rect x="250" y="700" width="11" height="1" fill="#000"/>
<rect x="250" y="681" width="11" height="1" fill="#000"/>
<rect x="250" y="662" width="11" height="1" fill="#000"/>
<rect x="250" y="642" width="11" height="1" fill="#000"/>
<rect x="250" y="623" width="11" height="1" fill="#000"/>
<rect x="250" y="603" width="11" height="1" fill="#000"/>
<rect x="250" y="584" width="11" height="1" fill="#000"/>
<rect x="250" y="565" width="11" height="1" fill="#000"/>
<rect x="250" y="545" width="11" height="1" fill="#000"/>
<rect x="250" y="526" width="11" height="1" fill="#000"/>
<rect x="250" y="506" width="11" height="1" fill="#000"/>
<rect x="250" y="487" width="11" height="1" fill="#000"/>
<rect x="250" y="468" width="11" height="1" fill="#000"/>
<rect x="250" y="448" width="11" height="1" fill="#000"/>
<rect x="250" y="429" width="11" height="1" fill="#000"/>
<rect x="250" y="410" width="11" height="1" fill="#000"/>
<rect x="250" y="390" width="11" height="1" fill="#000"/>
<rect x="250" y="371" width="11" height="1" fill="#000"/>
<rect x="250" y="351" width="11" height="1" fill="#000"/>
<rect x="250" y="332" width="11" height="1" fill="#000"/>
<rect x="250" y="313" width="11" height="1" fill="#000"/>
<rect x="250" y="293" width="11" height="1" fill="#000"/>
<rect x="250" y="274" width="11" height="1" fill="#000"/>
<rect x="250" y="254" width="11" height="1" fill="#000"/>
<rect x="250" y="235" width="11" height="1" fill="#000"/>
<rect x="250" y="216" width="11" height="1" fill="#000"/>
<rect x="250" y="196" width="11" height="1" fill="#000"/>
<rect x="250" y="177" width="11" height="1" fill="#000"/>
<rect x="250" y="157" width="11" height="1" fill="#000"/>
<rect x="299" y="850" width="1" height="11" fill="#000"/>
<rect x="369" y="850" width="1" height="11" fill="#000"/>
<rect x="439" y="850" width="1" height="11" fill="#000"/>
<rect x="508" y="850" width="1" height="11" fill="#000"/>
<rect x="578" y="850" width="1" height="11" fill="#000"/>
<rect x="648" y="850" width="1" height="11" fill="#000"/>
<rect x="717" y="850" width="1" height="11" fill="#000"/>
<rect x="787" y="850" width="1" height="11" fill="#000"/>
<rect x="857" y="850" width="1" height="11" fill="#000"/>
<rect x="927" y="850" width="1" height="11" fill="#000"/>
<rect x="996" y="850" width="1" height="11" fill="#000"/>
<rect x="1066" y="850" width="1" height="11" fill="#000"/>
<rect x="1136" y="850" width="1" height="11" fill="#000"/>
<rect x="1205" y="850" width="1" height="11" fill="#000"/>
<rect x="358" y="854" width="14" height="2" fill="#000"/>
<rect x="371" y="803" width="14" height="53" fill="#000"/>
<rect x="372" y="804" width="12" height="51" fill="#0000ff"/>
<rect x="384" y="503" width="13" height="353" fill="#000"/>
<rect x="385" y="504" width="11" height="351" fill="#0000ff"/>
<rect x="396" y="289" width="14" height="567" fill="#000"/>
<rect x="397" y="290" width="12" height="565" fill="#0000ff"/>
<rect x="409" y="208" width="14" height="648" fill="#000"/>
<rect x="410" y="209" width="12" height="646" fill="#0000ff"/>
<rect x="422" y="293" width="14" height="563" fill="#000"/>
<rect x="423" y="294" width="12" height="561" fill="#0000ff"/>
<rect x="435" y="338" width="14" height="518" fill="#000"/>
<rect x="436" y="339" width="12" height="516" fill="#0000ff"/>
<rect x="448" y="400" width="14" height="456" fill="#000"/>
<rect x="449" y="401" width="12" height="454" fill="#0000ff"/>
<rect x="461" y="489" width="14" height="367" fill="#000"/>
<rect x="462" y="490" width="12" height="365" fill="#0000ff"/>
<rect x="474" y="520" width="14" height="336" fill="#000"/>
<rect x="475" y="521" width="12" height="334" fill="#0000ff"/>
<rect x="487" y="642" width="14" height="214" fill="#000"/>
<rect x="488" y="643" width="12" height="212" fill="#0000ff"/>
<rect x="500" y="665" width="14" height="191" fill="#000"/>
<rect x="501" y="666" width="12" height="189" fill="#0000ff"/>
<rect x="513" y="708" width="14" height="148" fill="#000"/>
<rect x="514" y="709" width="12" height="146" fill="#0000ff"/>
<rect x="526" y="735" width="13" height="121" fill="#000"/>
<rect x="527" y="736" width="11" height="119" fill="#0000ff"/>
<rect x="538" y="759" width="14" height="97" fill="#000"/>
<rect x="539" y="760" width="12" height="95" fill="#0000ff"/>
<rect x="551" y="772" width="14" height="84" fill="#000"/>
<rect x="552" y="773" width="12" height="82" fill="#0000ff"/>
<rect x="564" y="795" width="14" height="61" fill="#000"/>
<rect x="565" y="796" width="12" height="59" fill="#0000ff"/>
<rect x="577" y="803" width="14" height="53" fill="#000"/>
<rect x="578" y="804" width="12" height="51" fill="#0000ff"/>
<rect x="590" y="807" width="14" height="49" fill="#000"/>
<rect x="591" y="808" width="12" height="47" fill="#0000ff"/>
<rect x="603" y="824" width="14" height="32" fill="#000"/>
<rect x="604" y="825" width="12" height="30" fill="#0000ff"/>
<rect x="616" y="824" width="14" height="32" fill="#000"/>
<rect x="617" y="825" width="12" height="30" fill="#0000ff"/>
<rect x="629" y="824" width="14" height="32" fill="#000"/>
<rect x="630" y="825" width="12" height="30" fill="#0000ff"/>
<rect x="642" y="832" width="14" height="24" fill="#000"/>
<rect x="643" y="833" width="12" height="22" fill="#0000ff"/>
<rect x="655" y="836" width="14" height="20" fill="#000"/>
<rect x="656" y="837" width="12" height="18" fill="#0000ff"/>
<rect x="668" y="842" width="13" height="14" fill="#000"/>
<rect x="669" y="843" width="11" height="12" fill="#0000ff"/>
<rect x="680" y="844" width="14" height="12" fill="#000"/>
<rect x="681" y="845" width="12" height="10" fill="#0000ff"/>
<rect x="693" y="840" width="14" height="16" fill="#000"/>
<rect x="694" y="841" width="12" height="14" fill="#0000ff"/>
<rect x="706" y="848" width="14" height="8" fill="#000"/>
<rect x="707" y="849" width="12" height="6" fill="#0000ff"/>
<rect x="719" y="850" width="14" height="6" fill="#000"/>
<rect x="720" y="851" width="12" height="4" fill="#0000ff"/>
<rect x="732" y="846" width="14" height="10" fill="#000"/>
<rect x="733" y="847" width="12" height="8" fill="#0000ff"/>
<rect x="745" y="848" width="14" height="8" fill="#000"/>
<rect x="746" y="849" width="12" height="6" fill="#0000ff"/>
<rect x="758" y="850" width="14" height="6" fill="#000"/>
<rect x="759" y="851" width="12" height="4" fill="#0000ff"/>
<rect x="771" y="852" width="14" height="4" fill="#000"/>
<rect x="772" y="853" width="12" height="2" fill="#0000ff"/>
<rect x="784" y="850" width="14" height="6" fill="#000"/>
<rect x="785" y="851" width="12" height="4" fill="#0000ff"/>
<rect x="810" y="854" width="13" height="2" fill="#000"/>
<rect x="835" y="854" width="14" height="2" fill="#000"/>
<rect x="861" y="854" width="14" height="2" fill="#000"/>
<rect x="874" y="854" width="14" height="2" fill="#000"/>
<rect x="887" y="854" width="14" height="2" fill="#000"/>
<rect x="926" y="854" width="14" height="2" fill="#000"/>
<rect x="952" y="854" width="13" height="2" fill="#000"/>
<rect x="964" y="854" width="14" height="2" fill="#000"/>
<rect x="977" y="854" width="14" height="2" fill="#000"/>
<rect x="990" y="854" width="14" height="2" fill="#000"/>
<rect x="1003" y="854" width="14" height="2" fill="#000"/>
<rect x="1055" y="854" width="14" height="2" fill="#000"/>
<rect x="1068" y="854" width="14" height="2" fill="#000"/>
<rect x="1171" y="854" width="14" height="2" fill="#000"/>
<rect x="1184" y="854" width="14" height="2" fill="#000"/>
<rect x="1210" y="854" width="14" height="2" fill="#000"/>
<rect x="364" y="852" width="1" height="4" fill="#000"/>
<rect x="361" y="852" width="7" height="1" fill="#000"/>
<rect x="361" y="855" width="7" height="1" fill="#000"/>
<rect x="377" y="793" width="1" height="21" fill="#000"/>
<rect x="374" y="793" width="7" height="1" fill="#000"/>
<rect x="374" y="813" width="7" height="1" fill="#000"/>
<rect x="390" y="476" width="1" height="54" fill="#000"/>
<rect x="387" y="476" width="7" height="1" fill="#000"/>
<rect x="387" y="529" width="7" height="1" fill="#000"/>
<rect x="402" y="256" width="1" height="67" fill="#000"/>
<rect x="399" y="256" width="7" height="1" fill="#000"/>
<rect x="399" y="322" width="7" height="1" fill="#000"/>
<rect x="415" y="172" width="1" height="72" fill="#000"/>
<rect x="412" y="172" width="7" height="1" fill="#000"/>
<rect x="412" y="243" width="7" height="1" fill="#000"/>
<rect x="428" y="260" width="1" height="67" fill="#000"/>
<rect x="425" y="260" width="7" height="1" fill="#000"/>
<rect x="425" y="326" width="7" height="1" fill="#000"/>
<rect x="441" y="306" width="1" height="64" fill="#000"/>
<rect x="438" y="306" width="7" height="1" fill="#000"/>
<rect x="438" y="369" width="7" height="1" fill="#000"/>
<rect x="454" y="370" width="1" height="61" fill="#000"/>
<rect x="451" y="370" width="7" height="1" fill="#000"/>
<rect x="451" y="430" width="7" height="1" fill="#000"/>
<rect x="467" y="462" width="1" height="55" fill="#000"/>
<rect x="464" y="462" width="7" height="1" fill="#000"/>
<rect x="464" y="516" width="7" height="1" fill="#000"/>
<rect x="480" y="495" width="1" height="52" fill="#000"/>
<rect x="477" y="495" width="7" height="1" fill="#000"/>
<rect x="477" y="546" width="7" height="1" fill="#000"/>
<rect x="493" y="622" width="1" height="42" fill="#000"/>
<rect x="490" y="622" width="7" height="1" fill="#000"/>
<rect x="490" y="663" width="7" height="1" fill="#000"/>
<rect x="506" y="646" width="1" height="40" fill="#000"/>
<rect x="503" y="646" width="7" height="1" fill="#000"/>
<rect x="503" y="685" width="7" height="1" fill="#000"/>
<rect x="519" y="691" width="1" height="35" fill="#000"/>
<rect x="516" y="691" width="7" height="1" fill="#000"/>
<rect x="516" y="725" width="7" height="1" fill="#000"/>
<rect x="532" y="720" width="1" height="32" fill="#000"/>
<rect x="529" y="720" width="7" height="1" fill="#000"/>
<rect x="529" y="751" width="7" height="1" fill="#000"/>
<rect x="544" y="745" width="1" height="28" fill="#000"/>
<rect x="541" y="745" width="7" height="1" fill="#000"/>
<rect x="541" y="772" width="7" height="1" fill="#000"/>
<rect x="557" y="759" width="1" height="27" fill="#000"/>
<rect x="554" y="759" width="7" height="1" fill="#000"/>
<rect x="554" y="785" width="7" height="1" fill="#000"/>
<rect x="570" y="785" width="1" height="22" fill="#000"/>
<rect x="567" y="785" width="7" height="1" fill="#000"/>
<rect x="567" y="806" width="7" height="1" fill="#000"/>
<rect x="583" y="793" width="1" height="21" fill="#000"/>
<rect x="580" y="793" width="7" height="1" fill="#000"/>
<rect x="580" y="813" width="7" height="1" fill="#000"/>
<rect x="596" y="797" width="1" height="21" fill="#000"/>
<rect x="593" y="797" width="7" height="1" fill="#000"/>
<rect x="593" y="817" width="7" height="1" fill="#000"/>
<rect x="609" y="817" width="1" height="16" fill="#000"/>
<rect x="606" y="817" width="7" height="1" fill="#000"/>
<rect x="606" y="832" width="7" height="1" fill="#000"/>
<rect x="622" y="817" width="1" height="16" fill="#000"/>
<rect x="619" y="817" width="7" height="1" fill="#000"/>
<rect x="619" y="832" width="7" height="1" fill="#000"/>
<rect x="635" y="817" width="1" height="16" fill="#000"/>
<rect x="632" y="817" width="7" height="1" fill="#000"/>
<rect x="632" y="832" width="7" height="1" fill="#000"/>
<rect x="648" y="826" width="1" height="14" fill="#000"/>
<rect x="645" y="826" width="7" height="1" fill="#000"/>
<rect x="645" y="839" width="7" height="1" fill="#000"/>
<rect x="661" y="830" width="1" height="13" fill="#000"/>
<rect x="658" y="830" width="7" height="1" fill="#000"/>
<rect x="658" y="842" width="7" height="1" fill="#000"/>
<rect x="674" y="837" width="1" height="11" fill="#000"/>
<rect x="671" y="837" width="7" height="1" fill="#000"/>
<rect x="671" y="847" width="7" height="1" fill="#000"/>
<rect x="686" y="839" width="1" height="11" fill="#000"/>
<rect x="683" y="839" width="7" height="1" fill="#000"/>
<rect x="683" y="849" width="7" height="1" fill="#000"/>
<rect x="699" y="835" width="1" height="11" fill="#000"/>
<rect x="696" y="835" width="7" height="1" fill="#000"/>
<rect x="696" y="845" width="7" height="1" fill="#000"/>
<rect x="712" y="844" width="1" height="9" fill="#000"/>
<rect x="709" y="844" width="7" height="1" fill="#000"/>
<rect x="709" y="852" width="7" height="1" fill="#000"/>
<rect x="725" y="846" width="1" height="8" fill="#000"/>
<rect x="722" y="846" width="7" height="1" fill="#000"/>
<rect x="722" y="853" width="7" height="1" fill="#000"/>
<rect x="738" y="841" width="1" height="10" fill="#000"/>
<rect x="735" y="841" width="7" height="1" fill="#000"/>
<rect x="735" y="850" width="7" height="1" fill="#000"/>
<rect x="751" y="844" width="1" height="9" fill="#000"/>
<rect x="748" y="844" width="7" height="1" fill="#000"/>
<rect x="748" y="852" width="7" height="1" fill="#000"/>
<rect x="764" y="846" width="1" height="8" fill="#000"/>
<rect x="761" y="846" width="7" height="1" fill="#000"/>
<rect x="761" y="853" width="7" height="1" fill="#000"/>
<rect x="777" y="849" width="1" height="6" fill="#000"/>
<rect x="774" y="849" width="7" height="1" fill="#000"/>
<rect x="774" y="854" width="7" height="1" fill="#000"/>
<rect x="790" y="846" width="1" height="8" fill="#000"/>
<rect x="787" y="846" width="7" height="1" fill="#000"/>
<rect x="787" y="853" width="7" height="1" fill="#000"/>
<rect x="816" y="852" width="1" height="4" fill="#000"/>
<rect x="813" y="852" width="7" height="1" fill="#000"/>
<rect x="813" y="855" width="7" height="1" fill="#000"/>
<rect x="841" y="852" width="1" height="4" fill="#000"/>
<rect x="838" y="852" width="7" height="1" fill="#000"/>
<rect x="838" y="855" width="7" height="1" fill="#000"/>
<rect x="867" y="852" width="1" height="4" fill="#000"/>
<rect x="864" y="852" width="7" height="1" fill="#000"/>
<rect x="864" y="855" width="7" height="1" fill="#000"/>
<rect x="880" y="852" width="1" height="4" fill="#000"/>
<rect x="877" y="852" width="7" height="1" fill="#000"/>
<rect x="877" y="855" width="7" height="1" fill="#000"/>
<rect x="893" y="852" width="1" height="4" fill="#000"/>
<rect x="890" y="852" width="7" height="1" fill="#000"/>
<rect x="890" y="855" width="7" height="1" fill="#000"/>
<rect x="932" y="852" width="1" height="4" fill="#000"/>
<rect x="929" y="852" width="7" height="1" fill="#000"/>
<rect x="929" y="855" width="7" height="1" fill="#000"/>
<rect x="958" y="852" width="1" height="4" fill="#000"/>
<rect x="955" y="852" width="7" height="1" fill="#000"/>
<rect x="955" y="855" width="7" height="1" fill="#000"/>
<rect x="970" y="852" width="1" height="4" fill="#000"/>
<rect x="967" y="852" width="7" height="1" fill="#000"/>
<rect x="967" y="855" width="7" height="1" fill="#000"/>
<rect x="983" y="852" width="1" height="4" fill="#000"/>
<rect x="980" y="852" width="7" height="1" fill="#000"/>
<rect x="980" y="855" width="7" height="1" fill="#000"/>
<rect x="996" y="852" width="1" height="4" fill="#000"/>
<rect x="993" y="852" width="7" height="1" fill="#000"/>
<rect x="993" y="855" width="7" height="1" fill="#000"/>
<rect x="1009" y="852" width="1" height="4" fill="#000"/>
<rect x="1006" y="852" width="7" height="1" fill="#000"/>
<rect x="1006" y="855" width="7" height="1" fill="#000"/>
<rect x="1061" y="852" width="1" height="4" fill="#000"/>
<rect x="1058" y="852" width="7" height="1" fill="#000"/>
<rect x="1058" y="855" width="7" height="1" fill="#000"/>
<rect x="1074" y="852" width="1" height="4" fill="#000"/>
<rect x="1071" y="852" width="7" height="1" fill="#000"/>
<rect x="1071" y="855" width="7" height="1" fill="#000"/>
<rect x="1177" y="852" width="1" height="4" fill="#000"/>
<rect x="1174" y="852" width="7" height="1" fill="#000"/>
<rect x="1174" y="855" width="7" height="1" fill="#000"/>
<rect x="1190" y="852" width="1" height="4" fill="#000"/>
<rect x="1187" y="852" width="7" height="1" fill="#000"/>
<rect x="1187" y="855" width="7" height="1" fill="#000"/>
<rect x="1216" y="852" width="1" height="4" fill="#000"/>
<rect x="1213" y="852" width="7" height="1" fill="#000"/>
<rect x="1213" y="855" width="7" height="1" fill="#000"/>
</svg>
<div class="t" style="left:200px;width:47px;text-align:right;top:851px">0</div>
<div class="t" style="left:200px;width:47px;text-align:right;top:832px">10</div>
<div class="t" style="left:200px;width:47px;text-align:right;top:813px">20</div>
<div class="t" style="left:200px;width:47px;text-align:right;top:793px">30</div>
<div class="t" style="left:200px;width:47px;text-align:right;top:774px">40</div>
<div class="t" style="left:200px;width:47px;text-align:right;top:755px">50</div>
<div class="t" style="left:200px;width:47px;text-align:right;top:735px">60</div>
<div class="t" style="left:200px;width:47px;text-align:right;top:716px">70</div>
<div class="t" style="left:200px;width:47px;text-align:right;top:696px">80</div>
<div class="t" style="left:200px;width:47px;text-align:right;top:677px">90</div>
<div class="t" style="left:200px;width:47px;text-align:right;top:658px">100</div>
<div class="t" style="left:200px;width:47px;text-align:right;top:638px">110</div>
<div class="t" style="left:200px;width:47px;text-align:right;top:619px">120</div>
<div class="t" style="left:200px;width:47px;text-align:right;top:599px">130</div>
<div class="t" style="left:200px;width:47px;text-align:right;top:580px">140</div>
<div class="t" style="left:200px;width:47px;text-align:right;top:561px">150</div>
<div class="t" style="left:200px;width:47px;text-align:right;top:541px">160</div>
<div class="t" style="left:200px;width:47px;text-align:right;top:522px">170</div>
<div class="t" style="left:200px;width:47px;text-align:right;top:502px">180</div>
<div class="t" style="left:200px;width:47px;text-align:right;top:483px">190</div>
<div class="t" style="left:200px;width:47px;text-align:right;top:464px">200</div>
<div class="t" style="left:200px;width:47px;text-align:right;top:444px">210</div>
<div class="t" style="left:200px;width:47px;text-align:right;top:425px">220</div>
<div class="t" style="left:200px;width:47px;text-align:right;top:406px">230</div>
<div class="t" style="left:200px;width:47px;text-align:right;top:386px">240</div>
<div class="t" style="left:200px;width:47px;text-align:right;top:367px">250</div>
<div class="t" style="left:200px;width:47px;text-align:right;top:347px">260</div>
<div class="t" style="left:200px;width:47px;text-align:right;top:328px">270</div>
<div class="t" style="left:200px;width:47px;text-align:right;top:309px">280</div>
<div class="t" style="left:200px;width:47px;text-align:right;top:289px">290</div>
<div class="t" style="left:200px;width:47px;text-align:right;top:270px">300</div>
<div class="t" style="left:200px;width:47px;text-align:right;top:250px">310</div>
<div class="t" style="left:200px;width:47px;text-align:right;top:231px">320</div>
<div class="t" style="left:200px;width:47px;text-align:right;top:212px">330</div>
<div class="t" style="left:200px;width:47px;text-align:right;top:192px">340</div>
<div class="t" style="left:200px;width:47px;text-align:right;top:173px">350</div>
<div class="t" style="left:200px;width:47px;text-align:right;top:153px">360</div>
<div class="t" style="left:269px;width:61px;text-align:center;top:864px">-200</div>
<div class="t" style="left:339px;width:61px;text-align:center;top:864px">0</div>
<div class="t" style="left:409px;width:61px;text-align:center;top:864px">200</div>
<div class="t" style="left:478px;width:61px;text-align:center;top:864px">400</div>
<div class="t" style="left:548px;width:61px;text-align:center;top:864px">600</div>
<div class="t" style="left:618px;width:61px;text-align:center;top:864px">800</div>
<div class="t" style="left:687px;width:61px;text-align:center;top:864px">1<b>,</b>000</div>
<div class="t" style="left:757px;width:61px;text-align:center;top:864px">1<b>,</b>200</div>
<div class="t" style="left:827px;width:61px;text-align:center;top:864px">1<b>,</b>400</div>
<div class="t" style="left:897px;width:61px;text-align:center;top:864px">1<b>,</b>600</div>
<div class="t" style="left:966px;width:61px;text-align:center;top:864px">1<b>,</b>800</div>
<div class="t" style="left:1036px;width:61px;text-align:center;top:864px">2<b>,</b>000</div>
<div class="t" style="left:1106px;width:61px;text-align:center;top:864px">2<b>,</b>200</div>
<div class="t" style="left:1175px;width:61px;text-align:center;top:864px">2<b>,</b>400</div>
<div class="t" style="left:229px;top:135px">Entries</div>
<div class="t" style="left:705px;top:882px">Mass in GeV</div>
<div class="t" style="left:641px;top:104px;font-weight:bold;font-size:14px;letter-spacing:0.33px">Mass Spectrum of di-jet</div>

<!-- splitter arrows -->
<svg style="left:0;top:0" width="30" height="930" shape-rendering="crispEdges"><path d="M10 921h1v1h1v1h1v1h-5v-1h1v-1h1z M19 921h7v1h-1v1h-1v1h-3v-1h-1v-1h-1z" fill="#000"/></svg>
<!-- console -->
<div class="a" style="left:4px;top:924px;width:1237px;height:58px;border-top:1px solid #000;border-left:2px solid #000;border-right:2px solid #fff;border-bottom:2px solid #fff;background:#fff"></div>
<div class="a" style="left:6px;top:925px;width:1233px;height:55px;border-top:1px solid #c0c0c0;border-left:1px solid #c0c0c0;border-right:1px solid #808080;border-bottom:1px solid #808080"></div>
<svg style="left:0;top:0" width="100" height="960" shape-rendering="crispEdges" fill="#000"><rect x="8" y="935" width="5" height="1"/><rect x="8" y="950" width="5" height="1"/><rect x="15" y="935" width="5" height="1"/><rect x="15" y="950" width="5" height="1"/><rect x="22" y="935" width="5" height="1"/><rect x="22" y="950" width="5" height="1"/><rect x="29" y="935" width="5" height="1"/><rect x="29" y="950" width="5" height="1"/><rect x="36" y="935" width="5" height="1"/><rect x="36" y="950" width="5" height="1"/><rect x="43" y="935" width="5" height="1"/><rect x="43" y="950" width="5" height="1"/><rect x="50" y="935" width="5" height="1"/><rect x="50" y="950" width="5" height="1"/><rect x="57" y="935" width="5" height="1"/><rect x="57" y="950" width="5" height="1"/><rect x="64" y="935" width="5" height="1"/><rect x="64" y="950" width="5" height="1"/><rect x="71" y="935" width="5" height="1"/><rect x="71" y="950" width="5" height="1"/><rect x="78" y="935" width="5" height="1"/><rect x="78" y="950" width="5" height="1"/></svg>
<div class="t" style="left:91px;top:929px;font-family:'Liberation Mono',monospace;font-size:11.67px;line-height:15px">Compiling C:\Jas\DijetAnalyzer.java<br>compile successful</div>

<!-- status -->
<div class="t" style="left:4px;top:985px;letter-spacing:0.14px">Analyzed 3404 events in 319350 milliseconds</div>
<div class="a" style="left:1090px;top:982px;width:152px;height:16px;border-top:1px solid #808080;border-left:1px solid #808080;border-right:1px solid #fff;border-bottom:1px solid #fff"></div>
<div class="a" style="left:1093px;top:984px;width:7px;height:12px;background:#000080"></div>
<div class="a" style="left:1102px;top:984px;width:7px;height:12px;background:#000080"></div>
<div class="a" style="left:1111px;top:984px;width:7px;height:12px;background:#000080"></div>
<div class="a" style="left:1120px;top:984px;width:7px;height:12px;background:#000080"></div>
<div class="a" style="left:1129px;top:984px;width:7px;height:12px;background:#000080"></div>
<div class="a" style="left:1138px;top:984px;width:7px;height:12px;background:#000080"></div>
<div class="a" style="left:1147px;top:984px;width:7px;height:12px;background:#000080"></div>
<div class="a" style="left:1156px;top:984px;width:7px;height:12px;background:#000080"></div>
<div class="a" style="left:1165px;top:984px;width:7px;height:12px;background:#000080"></div>
<div class="a" style="left:1174px;top:984px;width:7px;height:12px;background:#000080"></div>
<div class="a" style="left:1183px;top:984px;width:7px;height:12px;background:#000080"></div>
<div class="a" style="left:1192px;top:984px;width:7px;height:12px;background:#000080"></div>
<div class="a" style="left:1201px;top:984px;width:7px;height:12px;background:#000080"></div>
<div class="a" style="left:1210px;top:984px;width:7px;height:12px;background:#000080"></div>
<div class="a" style="left:1219px;top:984px;width:7px;height:12px;background:#000080"></div>
<div class="a" style="left:1228px;top:984px;width:7px;height:12px;background:#000080"></div>
<svg style="left:0;top:0" width="240" height="95" shape-rendering="crispEdges">
<path d="M8 9h4v1h3v-1h3v3h3v7h-13z" fill="#000"/>
<rect x="9" y="10" width="2" height="8" fill="#b00000"/>
<rect x="13" y="11" width="1" height="7" fill="#a00000"/>
<rect x="15" y="10" width="2" height="8" fill="#b00000"/>
<rect x="19" y="13" width="1" height="5" fill="#b00000"/>
<path d="M8.5 17.5l2-2h2l4-4 2 2 2-2" stroke="#f0e000" fill="none" shape-rendering="auto"/>
<rect x="215" y="74" width="16" height="16" fill="#fff"/>
<g fill="#ff0000"><rect x="220" y="75" width="1" height="1"/><rect x="222" y="75" width="2" height="1"/><rect x="226" y="75" width="1" height="1"/><rect x="219" y="76" width="1" height="1"/><rect x="218" y="77" width="1" height="1"/><rect x="221" y="77" width="1" height="2"/><rect x="223" y="77" width="1" height="1"/><rect x="225" y="76" width="1" height="2"/><rect x="219" y="78" width="1" height="1"/><rect x="220" y="79" width="1" height="1"/><rect x="222" y="79" width="1" height="1"/><rect x="224" y="79" width="1" height="1"/><rect x="219" y="80" width="1" height="1"/><rect x="222" y="80" width="1" height="1"/></g>
<g fill="#000080"><rect x="217" y="79" width="8" height="1"/><rect x="226" y="79" width="3" height="1"/><rect x="216" y="80" width="1" height="2"/><rect x="219" y="81" width="6" height="1"/><rect x="225" y="80" width="1" height="1"/><rect x="226" y="81" width="1" height="1"/><rect x="229" y="80" width="1" height="2"/><rect x="216" y="82" width="2" height="1"/><rect x="228" y="82" width="1" height="1"/><rect x="217" y="83" width="1" height="2"/><rect x="219" y="83" width="1" height="1"/><rect x="221" y="83" width="2" height="1"/><rect x="224" y="83" width="1" height="1"/><rect x="227" y="83" width="1" height="1"/><rect x="225" y="84" width="2" height="1"/><rect x="218" y="85" width="1" height="1"/><rect x="219" y="86" width="7" height="1"/><rect x="226" y="85" width="2" height="1"/><rect x="228" y="86" width="1" height="1"/><rect x="216" y="86" width="1" height="2"/><rect x="227" y="87" width="1" height="1"/><rect x="217" y="88" width="3" height="1"/><rect x="225" y="88" width="2" height="1"/></g>
</svg>
</body></html>
